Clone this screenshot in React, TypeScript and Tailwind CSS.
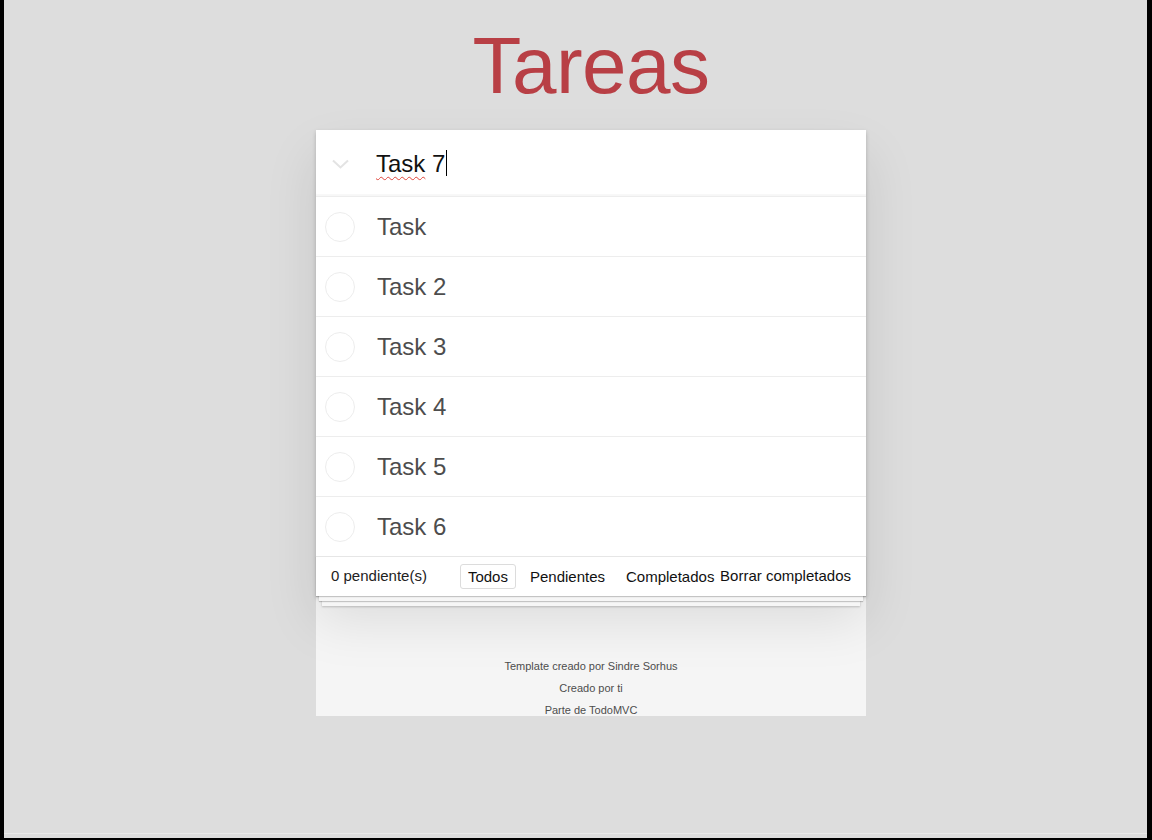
import React from 'react';

const tasks = ['Task', 'Task 2', 'Task 3', 'Task 4', 'Task 5', 'Task 6'];

const filters = [
  { label: 'Todos', selected: true, margin: 'ml-[33px]' },
  { label: 'Pendientes', selected: false, margin: 'ml-[6px]' },
  { label: 'Completados', selected: false, margin: 'ml-[5px] mr-[-3px]' }
];

const App: React.FC = () => {
  return (
    <div className="w-[1152px] h-[840px] bg-black border-l-4 border-r-[5px] border-b-2 border-black font-['Liberation_Sans',Arial,sans-serif]">
      <div className="h-full bg-[#dddddd] flex flex-col">
        <div className="ml-[312px] w-[550px] flex flex-col">
          <h1 className="pt-[26px] h-[130px] text-center text-[80px] leading-[80px] text-[#b83f45] tracking-[-0.5px]">
            Tareas
          </h1>

          <section className="relative z-10 bg-white shadow-[0_2px_4px_0_rgba(0,0,0,0.2),0_25px_50px_0_rgba(0,0,0,0.1)]">
            {/* new task input */}
            <div className="h-[66px] flex items-center pl-[16px] shadow-[inset_0_-2px_1px_rgba(0,0,0,0.03)]">
              <svg width="17" height="10" viewBox="0 0 17 10" className="shrink-0 mt-[2px]">
                <path d="M1 1.5 L8.5 8.5 L16 1.5" fill="none" stroke="#e3e3e3" strokeWidth="2" />
              </svg>
              <div className="ml-[27px] flex items-center text-[24px] leading-[29px] text-[#111]">
                <span className="underline decoration-wavy decoration-[#e0453b] decoration-1 underline-offset-[4px]">Task</span>
                <span className="whitespace-pre"> 7</span>
                <span className="ml-[1px] w-px h-[26px] bg-black" />
              </div>
            </div>

            <ul>
              {tasks.map((task) => (
                <li key={task} className="h-[60px] flex items-center pl-[9px] border-t border-[#ededed]">
                  <span className="w-[30px] h-[30px] rounded-full border border-[#ededed] shrink-0" />
                  <span className="ml-[22px] text-[24px] leading-[29px] text-[#4d4d4d]">{task}</span>
                </li>
              ))}
            </ul>

            <footer className="relative h-[40px] flex items-center px-[15px] border-t border-[#e6e6e6] text-[15px] text-[#111] shadow-[0_1px_1px_rgba(0,0,0,0.2),0_8px_0_-3px_#f6f6f6,0_9px_1px_-3px_rgba(0,0,0,0.2),0_16px_0_-6px_#f6f6f6,0_17px_2px_-6px_rgba(0,0,0,0.2)]">
              <span className="shrink-0 text-[#222]">0 pendiente(s)</span>
              {filters.map((f) => (
                <button
                  key={f.label}
                  className={`${f.margin} shrink-0 px-[7px] py-[3px] rounded-[3px] border leading-[17px] ${
                    f.selected ? 'border-[#dcdcdc]' : 'border-transparent'
                  }`}
                >
                  {f.label}
                </button>
              ))}
              <button className="ml-auto shrink-0">Borrar completados</button>
            </footer>
          </section>

          <div className="bg-[#f5f5f5] pt-[65px] flex flex-col items-center text-[11px] leading-[11px] text-[#4d4d4d] gap-[11px] h-[120px]">
            <p>Template creado por Sindre Sorhus</p>
            <p>Creado por ti</p>
            <p>Parte de TodoMVC</p>
          </div>
        </div>
        <div className="mt-auto h-[5px] border-t border-[#e9e9e9] bg-[#dddddd]" />
      </div>
    </div>
  );
};

export default App;
